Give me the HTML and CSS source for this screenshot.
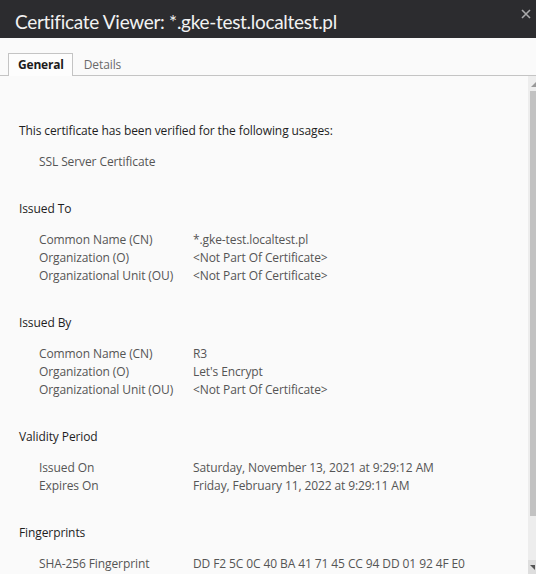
FILE: index.html
```html
<!DOCTYPE html>
<html>
<head>
<meta charset="utf-8">
<link rel="stylesheet" href="styles.css">
</head>
<body>
<div class="window">
  <header class="titlebar">
    <h1 class="title">Certificate Viewer: *.gke-test.localtest.pl</h1>
    <span class="close">
      <svg width="10" height="10" viewBox="0 0 10 10"><path d="M1 1L9 9M9 1L1 9" stroke="#a9a9ab" stroke-width="1.6"/></svg>
    </span>
  </header>
  <nav class="tabs">
    <div class="tab active">General</div>
    <div class="tab">Details</div>
  </nav>
  <div class="body">
    <main class="content">
      <p class="intro">This certificate has been verified for the following usages:</p>
      <p class="usage">SSL Server Certificate</p>

      <section class="section">
        <h2 class="heading">Issued To</h2>
        <div class="rows">
          <div class="row"><span class="label">Common Name (CN)</span><span class="value">*.gke-test.localtest.pl</span></div>
          <div class="row"><span class="label">Organization (O)</span><span class="value">&lt;Not Part Of Certificate&gt;</span></div>
          <div class="row"><span class="label">Organizational Unit (OU)</span><span class="value">&lt;Not Part Of Certificate&gt;</span></div>
        </div>
      </section>

      <section class="section">
        <h2 class="heading">Issued By</h2>
        <div class="rows">
          <div class="row"><span class="label">Common Name (CN)</span><span class="value">R3</span></div>
          <div class="row"><span class="label">Organization (O)</span><span class="value">Let's Encrypt</span></div>
          <div class="row"><span class="label">Organizational Unit (OU)</span><span class="value">&lt;Not Part Of Certificate&gt;</span></div>
        </div>
      </section>

      <section class="section">
        <h2 class="heading">Validity Period</h2>
        <div class="rows">
          <div class="row"><span class="label">Issued On</span><span class="value">Saturday, November 13, 2021 at 9:29:12 AM</span></div>
          <div class="row"><span class="label">Expires On</span><span class="value">Friday, February 11, 2022 at 9:29:11 AM</span></div>
        </div>
      </section>

      <section class="section">
        <h2 class="heading">Fingerprints</h2>
        <div class="rows">
          <div class="row"><span class="label">SHA-256 Fingerprint</span><span class="value">DD F2 5C 0C 40 BA 41 71 45 CC 94 DD 01 92 4F E0</span></div>
        </div>
      </section>
    </main>
    <div class="scrollbar">
      <div class="arrow up"></div>
      <div class="track"><div class="thumb"></div></div>
      <div class="arrow down"></div>
    </div>
  </div>
</div>
</body>
</html>
```

FILE: styles.css
```css
* { box-sizing: border-box; }
html, body { margin: 0; padding: 0; }
body {
  width: 536px;
  height: 574px;
  overflow: hidden;
  background: #fafafa;
  font-family: "Open Sans", "Noto Sans", sans-serif;
  font-size: 12px;
  letter-spacing: -0.1px;
}
.window { display: flex; flex-direction: column; height: 574px; }
.titlebar {
  position: relative;
  height: 38px;
  background: #2c2c2f;
  padding-left: 15px;
  flex: none;
}
.title {
  margin: 0;
  font-family: Lato, "Open Sans", sans-serif;
  font-weight: 400;
  font-size: 19px;
  letter-spacing: -0.3px;
  color: #f2f2f2;
  padding-top: 5px;
  line-height: 33px;
}
.close {
  position: absolute;
  top: 9px;
  right: 5px;
  width: 10px;
  height: 10px;
  display: block;
}
.close svg { display: block; }
.tabs {
  flex: none;
  display: flex;
  margin-top: 15px;
  padding-left: 8px;
  border-bottom: 1px solid #c4c4c4;
  height: 23px;
}
.tab {
  height: 22px;
  padding: 0 11px;
  line-height: 23px;
  color: #6a6a6a;
}
.tab.active {
  font-weight: 700;
  color: #1c1c1c;
  background: #fdfdfd;
  border: 1px solid #c4c4c4;
  border-bottom: none;
  height: 23px;
  margin-bottom: -1px;
  padding: 0 8px 0 9px;
  line-height: 22px;
  letter-spacing: -0.2px;
}
.body { flex: 1; display: flex; min-height: 0; }
.content { flex: 1; padding: 46px 0 0 19px; color: #2a2a2a; }
.intro { margin: 0; line-height: 18px; color: #1e1e1e; }
.usage { margin: 13px 0 0 20px; line-height: 18px; color: #555; }
.section { margin-top: 29px; }
.heading {
  margin: 0;
  font-size: 12px;
  font-weight: 400;
  line-height: 18px;
  color: #1e1e1e;
}
.rows { margin-top: 13px; padding-left: 20px; }
.row { display: flex; line-height: 18px; color: #555; }
.label { width: 154px; flex: none; }
.value { white-space: nowrap; }
.scrollbar {
  width: 8px;
  flex: none;
  background: #ededed;
  display: flex;
  flex-direction: column;
  padding-left: 2px;
}
.arrow { height: 14px; position: relative; }
.arrow.up::after {
  content: "";
  position: absolute;
  left: 1px; top: 6px;
  border-left: 5px solid transparent;
  border-bottom: 5px solid #999;
}
.arrow.down { background: #dedede; margin-left: -2px; }
.arrow.down::after {
  content: "";
  position: absolute;
  left: 2px; top: 5px;
  border-left: 5px solid transparent;
  border-top: 5px solid #555;
}
.track { flex: 1; position: relative; }
.thumb {
  position: absolute;
  left: 0; right: 0;
  top: 1px;
  height: 425px;
  background: #c2c2c2;
}
```
